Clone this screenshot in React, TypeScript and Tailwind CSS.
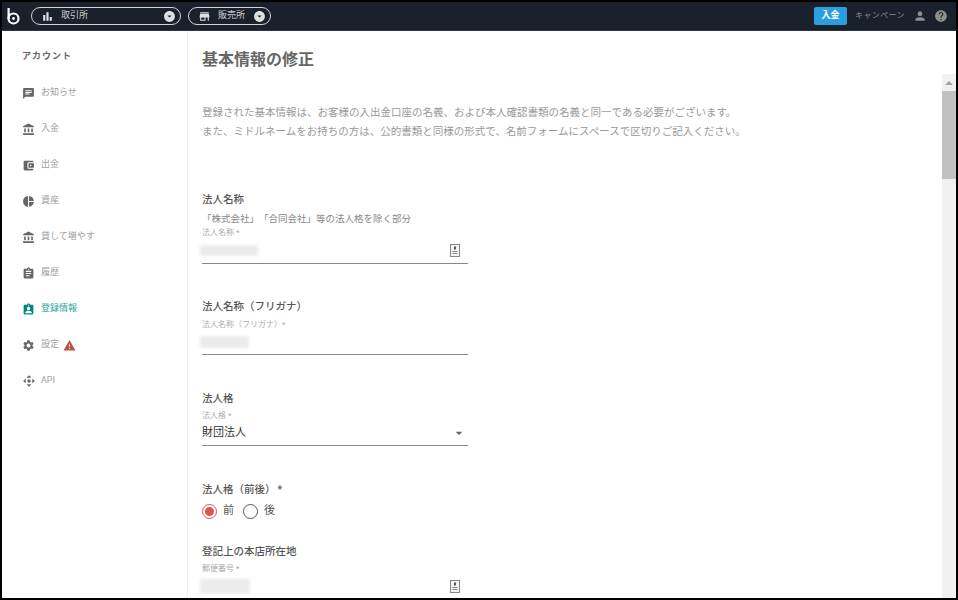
import type { ComponentType, ReactNode } from 'react';
import {
  MdAccountBalance,
  MdAccountBalanceWallet,
  MdArrowDropDown,
  MdArrowDropDownCircle,
  MdAssignment,
  MdAssignmentInd,
  MdBarChart,
  MdChat,
  MdControlCamera,
  MdHelp,
  MdPerson,
  MdPieChart,
  MdSettings,
  MdStore,
  MdWarning,
} from 'react-icons/md';

const font = "font-['Roboto','Noto_Sans_CJK_JP',sans-serif]";

const navItems: { label: string; icon: ComponentType<{ className?: string }>; active?: boolean; warn?: boolean }[] = [
  { label: 'お知らせ', icon: MdChat },
  { label: '入金', icon: MdAccountBalance },
  { label: '出金', icon: MdAccountBalanceWallet },
  { label: '資産', icon: MdPieChart },
  { label: '貸して増やす', icon: MdAccountBalance },
  { label: '履歴', icon: MdAssignment },
  { label: '登録情報', icon: MdAssignmentInd, active: true },
  { label: '設定', icon: MdSettings, warn: true },
  { label: 'API', icon: MdControlCamera },
];

function Logo() {
  return (
    <svg viewBox="0 0 13 17" className="w-[13px] h-[17px]" fill="none" stroke="white" strokeWidth="2.2">
      <path d="M1.6 0v11" />
      <circle cx="6.5" cy="10.5" r="5" />
      <circle cx="6.5" cy="10.5" r="1.4" fill="white" stroke="none" />
    </svg>
  );
}

function IdIcon() {
  return (
    <svg viewBox="0 0 10 13" className="w-[10px] h-[13px]" fill="none">
      <rect x="0.5" y="0.5" width="9" height="12" stroke="#888" fill="#f2f2f2" />
      <rect x="4" y="2.5" width="2" height="3" fill="#555" />
      <rect x="2.5" y="7" width="5" height="1" fill="#888" />
      <rect x="2.5" y="9" width="5" height="1" fill="#888" />
    </svg>
  );
}

function Pill({ icon: Icon, label, width }: { icon: ComponentType<{ className?: string }>; label: string; width: string }) {
  return (
    <div className={`${width} h-[18px] rounded-full border border-[#d4d4d4] flex items-center pl-[9px] pr-[4px]`}>
      <Icon className="w-[13px] h-[13px] text-[#e0e0e0]" />
      <span className="ml-[7px] text-[9px] text-[#cfcfcf] flex-1">{label}</span>
      <MdArrowDropDownCircle className="w-[13px] h-[13px] text-[#e0e0e0]" />
    </div>
  );
}

function Blurred({ size }: { size: string }) {
  return <div className={`${size} -ml-[2px] bg-[#ececec] blur-[1.5px]`} />;
}

function Field({ label, children, icon, tall }: { label: string; children: ReactNode; icon?: ReactNode; tall?: boolean }) {
  return (
    <div className="w-[266px]">
      <div className="text-[8px] leading-[10px] text-[#aaa]">{label}</div>
      <div className={`${tall ? 'h-[26px]' : 'h-[25px]'} border-b border-[#888] flex items-center justify-between`}>
        {children}
        {icon}
      </div>
    </div>
  );
}

export default function App() {
  return (
    <div className={`${font} w-[958px] h-[600px] border-2 border-black bg-white overflow-hidden flex flex-col`}>
      <header className="h-[29px] shrink-0 bg-[#1a202c] flex items-center pl-[5px] pr-[8px] border-b border-[#2d3542]">
        <Logo />
        <div className="ml-[11px] flex gap-[7px]">
          <Pill icon={MdBarChart} label="取引所" width="w-[150px]" />
          <Pill icon={MdStore} label="販売所" width="w-[83px]" />
        </div>
        <div className="ml-auto flex items-center">
          <div className="w-[33px] h-[18px] rounded-[2px] bg-[#2a9fe0] text-white text-[9px] font-bold flex items-center justify-center">入金</div>
          <span className="ml-[8px] text-[8px] text-[#8a8a8a] tracking-[0.4px]">キャンペーン</span>
          <MdPerson className="ml-[8px] w-[14px] h-[14px] text-[#8f8f8f]" />
          <MdHelp className="ml-[7px] w-[14px] h-[14px] text-[#8f8f8f]" />
        </div>
      </header>

      <div className="flex flex-1 min-h-0">
        <aside className="w-[186px] shrink-0 border-r border-[#f0f0f0] pt-[19px]">
          <div className="pl-[20px] text-[9px] leading-[12px] font-bold text-[#666] tracking-[1px]">アカウント</div>
          <nav className="mt-[13px] flex flex-col">
            {navItems.map(({ label, icon: Icon, active, warn }) => (
              <div key={label} className="h-[36px] flex items-center pl-[20px]">
                <Icon className={`${label === 'API' ? 'w-[14px] h-[14px] -mr-[1px]' : 'w-[13px] h-[13px]'} ${active ? 'text-[#00897b]' : 'text-[#666]'}`} />
                <span className={`ml-[6px] text-[9px] ${active ? 'text-[#26a69a]' : 'text-[#a0a0a0]'}`}>{label}</span>
                {warn && <MdWarning className="ml-[4px] w-[13px] h-[13px] text-[#c0504a]" />}
              </div>
            ))}
          </nav>
        </aside>

        <main className="flex-1 min-w-0 flex">
          <div className="flex-1 min-w-0 pl-[14px] pt-[19px]">
            <h1 className="text-[16px] leading-[20px] font-bold text-[#666]">基本情報の修正</h1>
            <p className="mt-[33px] text-[10.5px] leading-[19px] text-[#999]">
              登録された基本情報は、お客様の入出金口座の名義、および本人確認書類の名義と同一である必要がございます。
              <br />
              また、ミドルネームをお持ちの方は、公的書類と同様の形式で、名前フォームにスペースで区切りご記入ください。
            </p>

            <h2 className="mt-[52px] text-[10.5px] leading-[14px] font-medium text-[#555]">法人名称</h2>
            <p className="mt-[6px] text-[9.5px] leading-[11px] text-[#888] [text-spacing-trim:space-all]">「株式会社」「合同会社」等の法人格を除く部分</p>
            <div className="mt-[4px]">
              <Field tall label="法人名称 *" icon={<span className="mr-[8px]"><IdIcon /></span>}>
                <Blurred size="w-[58px] h-[11px]" />
              </Field>
            </div>

            <h2 className="mt-[36px] text-[10.5px] leading-[14px] font-medium text-[#555] [text-spacing-trim:space-all]">法人名称（フリガナ）</h2>
            <div className="mt-[6px]">
              <Field label="法人名称（フリガナ）*">
                <Blurred size="w-[49px] h-[12px]" />
              </Field>
            </div>

            <h2 className="mt-[37px] text-[10.5px] leading-[14px] font-medium text-[#555]">法人格</h2>
            <div className="mt-[5px]">
              <Field label="法人格 *" icon={<MdArrowDropDown className="w-[16px] h-[16px] text-[#666] mr-[1px]" />}>
                <span className="text-[11px] text-[#333]">財団法人</span>
              </Field>
            </div>

            <h2 className="mt-[37px] text-[10.5px] leading-[14px] font-medium text-[#555] [text-spacing-trim:space-all]">
              法人格（前後）<span className="ml-[2px]">*</span>
            </h2>
            <div className="mt-[6px] flex items-center text-[11px] text-[#555]">
              <span className="w-[15px] h-[15px] rounded-full border border-[#e0524f] flex items-center justify-center">
                <span className="w-[9px] h-[9px] rounded-full bg-[#e0524f]" />
              </span>
              <span className="ml-[6px]">前</span>
              <span className="ml-[9px] w-[15px] h-[15px] rounded-full border border-[#555]" />
              <span className="ml-[6px]">後</span>
            </div>

            <h2 className="mt-[25px] text-[10.5px] leading-[14px] font-medium text-[#555]">登記上の本店所在地</h2>
            <div className="mt-[5px]">
              <Field tall label="郵便番号 *" icon={<span className="mr-[8px]"><IdIcon /></span>}>
                <Blurred size="w-[50px] h-[15px]" />
              </Field>
            </div>
          </div>

          <div className="w-[14px] shrink-0 mt-[43px] bg-[#f1f1f1] flex flex-col">
            <div className="h-[17px] flex items-center justify-center">
              <div className="w-0 h-0 border-x-[4px] border-x-transparent border-b-[4px] border-b-[#a3a3a3]" />
            </div>
            <div className="h-[88px] bg-[#c1c1c1]" />
          </div>
        </main>
      </div>
    </div>
  );
}
